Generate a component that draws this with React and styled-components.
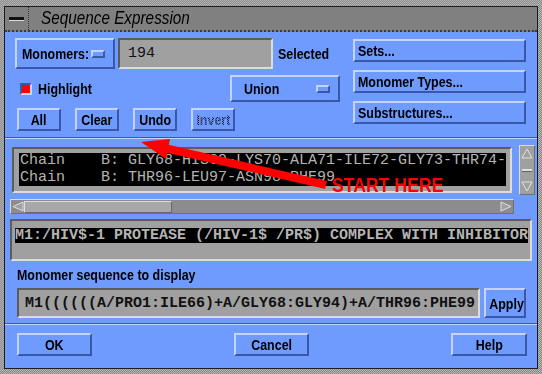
import React from 'react';
import styled, { createGlobalStyle } from 'styled-components';

/* ---------- palette ---------- */
const BLUE = '#6f9bff';
const BLUE_LIGHT = '#c2d4ff';
const BLUE_DARK = '#3a58a8';
const GREY = '#a0a0a0';
const GREY_LIGHT = '#dcdcdc';
const GREY_DARK = '#5c5c5c';
const UI = `"Liberation Sans", Arial, sans-serif`;
const MONO = `"Liberation Mono", "DejaVu Sans Mono", monospace`;

const Global = createGlobalStyle`
  html, body { margin: 0; padding: 0; background: #9a9a9a; }
  body { font-family: ${UI}; }
`;

/* the original toolkit font is a narrow helvetica: squeeze the text */
const Txt = styled.span`
  display: inline-block;
  white-space: nowrap;
  min-width: 0;
  flex: 0 1 auto;
  transform: scaleX(${({ $s }) => $s || 0.83});
  transform-origin: ${({ $o }) => $o || 'center'};
`;

/* ---------- window frame ---------- */
const Screen = styled.div`
  position: relative;
  width: 542px;
  height: 374px;
  box-sizing: border-box;
  padding: 6px 4px 5px 4px;
  display: flex;
  flex-direction: column;
  background-color: #b4b4b4;
  background-image: repeating-conic-gradient(#8a8a8a 0 25%, transparent 0 50%);
  background-size: 2px 2px;
  overflow: hidden;
`;

const Window = styled.div`
  flex: 1;
  display: flex;
  flex-direction: column;
  border: 1px solid #1c1c1c;
`;

const TitleBar = styled.div`
  height: 23px;
  display: flex;
  align-items: center;
  background: #808080;
  border-bottom: 2px dotted #3a3a3a;
`;

const MenuButton = styled.div`
  width: 24px;
  height: 100%;
  display: flex;
  align-items: center;
  justify-content: center;
  border-right: 1px dotted #303030;
  box-sizing: border-box;

  &::before {
    content: '';
    width: 15px;
    height: 3px;
    background: #111;
    border-bottom: 1px solid #ddd;
  }
`;

const Title = styled.div`
  margin-left: 12px;
  font-family: ${UI};
  font-style: italic;
  font-size: 18px;
  color: #000;
`;

const Body = styled.div`
  flex: 1;
  background: ${BLUE};
  display: flex;
  flex-direction: column;
`;

/* ---------- generic parts ---------- */
const Button = styled.div`
  box-sizing: border-box;
  width: ${({ $w }) => $w}px;
  height: ${({ $h }) => $h || 23}px;
  border: 2px solid;
  border-color: ${BLUE_LIGHT} ${BLUE_DARK} ${BLUE_DARK} ${BLUE_LIGHT};
  display: flex;
  align-items: center;
  justify-content: ${({ $left }) => ($left ? 'flex-start' : 'center')};
  padding: ${({ $left }) => ($left ? '0 0 0 3px' : '0')};
  font-family: ${UI};
  font-weight: bold;
  font-size: 15px;
  color: #000;
  white-space: nowrap;
`;

const OptionButton = styled(Button)`
  justify-content: flex-start;
  padding: 0 8px 0 ${({ $pl }) => $pl || 5}px;
`;

const Stipple = styled.span`
  color: transparent;
  background-image: repeating-conic-gradient(#000 0 25%, transparent 0 50%);
  background-size: 2px 2px;
  -webkit-background-clip: text;
  background-clip: text;
`;

const Indicator = styled.span`
  flex: none;
  margin-left: auto;
  width: 10px;
  height: 4px;
  border: 2px solid;
  border-color: ${BLUE_LIGHT} ${BLUE_DARK} ${BLUE_DARK} ${BLUE_LIGHT};
`;

const Field = styled.div`
  box-sizing: border-box;
  width: ${({ $w }) => $w}px;
  height: ${({ $h }) => $h}px;
  margin-left: ${({ $ml }) => $ml || 0}px;
  background: ${GREY};
  border: 2px solid;
  border-color: ${GREY_DARK} ${GREY_LIGHT} ${GREY_LIGHT} ${GREY_DARK};
  display: flex;
  align-items: center;
  padding-left: ${({ $pad }) => $pad || 6}px;
  font-family: ${MONO};
  font-weight: ${({ $thin }) => ($thin ? 'normal' : 'bold')};
  font-size: 15px;
  color: #111;
  white-space: nowrap;
  overflow: hidden;
`;

const Label = styled.div`
  font-family: ${UI};
  font-weight: bold;
  font-size: 15px;
  color: #000;
  margin-left: ${({ $ml }) => $ml || 0}px;
`;

const Separator = styled.div`
  height: 1px;
  border-top: 1px solid ${BLUE_DARK};
  background: ${BLUE_LIGHT};
  margin-top: ${({ $mt }) => $mt}px;
`;

/* ---------- top section ---------- */
const Top = styled.div`
  display: grid;
  grid-template-columns: 325px 173px;
  column-gap: 13px;
  padding: 6px 0 0 10px;
`;

const LeftCol = styled.div`
  display: flex;
  flex-direction: column;
  gap: 6px;
`;

const Row = styled.div`
  display: flex;
  align-items: center;
  gap: ${({ $gap }) => $gap || 0}px;
  padding-left: ${({ $pl }) => $pl || 0}px;
  justify-content: ${({ $between }) => ($between ? 'space-between' : 'flex-start')};
`;

const RightCol = styled.div`
  display: flex;
  flex-direction: column;
  gap: 8px;
  padding-top: 1px;
`;

const Check = styled.div`
  display: flex;
  align-items: center;
  gap: 6px;
  padding-left: 5px;
`;

const CheckBox = styled.span`
  box-sizing: border-box;
  width: 12px;
  height: 12px;
  background: #ff0000;
  border: 2px solid;
  border-color: ${BLUE_DARK} ${BLUE_LIGHT} ${BLUE_LIGHT} ${BLUE_DARK};
`;

/* ---------- list section ---------- */
const ListRow = styled.div`
  display: flex;
  align-items: center;
  gap: 7px;
  padding: 6px 0 0 7px;
`;

const ListFrame = styled.div`
  box-sizing: border-box;
  width: 500px;
  height: 46px;
  background: ${GREY};
  border: 2px solid;
  border-color: ${GREY_DARK} ${GREY_LIGHT} ${GREY_LIGHT} ${GREY_DARK};
  padding: 4px 4px 0 5px;
`;

const Selected = styled.div`
  background: #000;
  color: #b4b4b4;
  font-family: ${MONO};
  font-size: 15px;
  line-height: 16.5px;
  white-space: pre;
  overflow: hidden;
  padding-left: 1px;
`;

const VScroll = styled.div`
  box-sizing: border-box;
  width: 16px;
  height: 50px;
  background: ${GREY};
  border: 1px solid;
  border-color: ${GREY_LIGHT} #707070 #707070 ${GREY_LIGHT};
  display: flex;
  flex-direction: column;
  align-items: center;
  justify-content: space-between;
  padding: 2px 0;
`;

const HScroll = styled.div`
  box-sizing: border-box;
  margin: 4px 0 0 5px;
  width: 504px;
  height: 15px;
  background: #8c8c8c;
  border: 1px solid;
  border-color: ${GREY_LIGHT} #707070 #707070 ${GREY_LIGHT};
  display: flex;
  align-items: center;
  padding: 0 1px;
`;

const Thumb = styled.div`
  box-sizing: border-box;
  width: ${({ $w }) => $w}px;
  height: 12px;
  background: #a8a8a8;
  border: 1px solid;
  border-color: ${GREY_LIGHT} #6a6a6a #6a6a6a ${GREY_LIGHT};
`;

const Spacer = styled.div`
  flex: 1;
`;

const InfoBox = styled.div`
  box-sizing: border-box;
  margin: 5px 0 0 5px;
  width: 522px;
  height: 42px;
  background: ${GREY};
  border: 2px solid;
  border-color: ${GREY_DARK} ${GREY_LIGHT} ${GREY_LIGHT} ${GREY_DARK};
  padding: 4px 0 0 3px;
`;

const InfoLine = styled.span`
  display: inline-block;
  background: #000;
  color: #b4b4b4;
  font-family: ${MONO};
  font-weight: bold;
  font-size: 15px;
  line-height: 15px;
  white-space: pre;
`;

/* ---------- bottom section ---------- */
const SeqLabel = styled(Label)`
  padding: 6px 0 0 12px;
  line-height: 16px;
`;

const SeqRow = styled(Row)`
  padding: 5px 0 0 12px;
  gap: 4px;
`;

const Actions = styled.div`
  display: flex;
  justify-content: space-between;
  padding: 8px 10px 0 12px;
`;

/* ---------- annotation overlay ---------- */
const Overlay = styled.svg`
  position: absolute;
  left: 0;
  top: 0;
  pointer-events: none;
`;

const Annotation = styled.div`
  position: absolute;
  left: 332px;
  top: 173px;
  font-family: ${UI};
  font-weight: bold;
  font-size: 21px;
  color: #ff0000;
  white-space: nowrap;
`;

const ArrowGlyph = ({ dir }) => (
  <svg width="12" height="11" viewBox="0 0 12 11">
    {dir === 'up' && <polygon points="6,1 11,10 1,10" fill="#a0a0a0" stroke="#e0e0e0" strokeWidth="1" />}
    {dir === 'down' && <polygon points="1,1 11,1 6,10" fill="#a0a0a0" stroke="#e0e0e0" strokeWidth="1" />}
    {dir === 'left' && <polygon points="1,5.5 11,1 11,10" fill="#a0a0a0" stroke="#e0e0e0" strokeWidth="1" />}
    {dir === 'right' && <polygon points="1,1 11,5.5 1,10" fill="#a0a0a0" stroke="#e0e0e0" strokeWidth="1" />}
  </svg>
);

const MidBar = styled.span`
  width: 10px;
  height: 2px;
  background: #e0e0e0;
  border-bottom: 1px solid #606060;
`;

export default function App() {
  return (
    <>
      <Global />
      <Screen>
        <Window>
          <TitleBar>
            <MenuButton />
            <Title>
              <Txt $s={0.85} $o="left">Sequence Expression</Txt>
            </Title>
          </TitleBar>
          <Body>
            <Top>
              <LeftCol>
                <Row>
                  <OptionButton $w={100} $h={31}>
                    <Txt $o="left">Monomers:</Txt>
                    <Indicator />
                  </OptionButton>
                  <Field $w={164} $h={31} $pad={8} $ml={3} $thin>
                    194
                  </Field>
                  <Label $ml={5}>
                    <Txt $o="left">Selected</Txt>
                  </Label>
                </Row>
                <Row $between>
                  <Check>
                    <CheckBox />
                    <Label>
                      <Txt $o="left">Highlight</Txt>
                    </Label>
                  </Check>
                  <OptionButton $w={110} $h={27} $pl={12}>
                    <Txt $o="left">Union</Txt>
                    <Indicator />
                  </OptionButton>
                </Row>
                <Row $gap={14} $pl={2}>
                  <Button $w={44}><Txt>All</Txt></Button>
                  <Button $w={44}><Txt>Clear</Txt></Button>
                  <Button $w={44}><Txt>Undo</Txt></Button>
                  <Button $w={44}>
                    <Txt>
                      <Stipple>Invert</Stipple>
                    </Txt>
                  </Button>
                </Row>
              </LeftCol>
              <RightCol>
                <Button $w={173} $left><Txt $o="left">Sets...</Txt></Button>
                <Button $w={173} $left><Txt $o="left">Monomer Types...</Txt></Button>
                <Button $w={173} $left><Txt $o="left">Substructures...</Txt></Button>
              </RightCol>
            </Top>

            <Separator $mt={6} />

            <ListRow>
              <ListFrame>
                <Selected>
                  {'Chain    B: GLY68-HIS69-LYS70-ALA71-ILE72-GLY73-THR74-\nChain    B: THR96-LEU97-ASN98-PHE99'}
                </Selected>
              </ListFrame>
              <VScroll>
                <ArrowGlyph dir="up" />
                <MidBar />
                <ArrowGlyph dir="down" />
              </VScroll>
            </ListRow>

            <HScroll>
              <ArrowGlyph dir="left" />
              <Thumb $w={148} />
              <Spacer />
              <ArrowGlyph dir="right" />
            </HScroll>

            <InfoBox>
              <InfoLine>M1:/HIV$-1 PROTEASE (/HIV-1$ /PR$) COMPLEX WITH INHIBITOR</InfoLine>
            </InfoBox>

            <SeqLabel>
              <Txt $o="left">Monomer sequence to display</Txt>
            </SeqLabel>
            <SeqRow>
              <Field $w={463} $h={30}>M1((((((A/PRO1:ILE66)+A/GLY68:GLY94)+A/THR96:PHE99</Field>
              <Button $w={42} $h={30}><Txt>Apply</Txt></Button>
            </SeqRow>

            <Separator $mt={5} />

            <Actions>
              <Button $w={75}><Txt>OK</Txt></Button>
              <Button $w={75}><Txt>Cancel</Txt></Button>
              <Button $w={76}><Txt>Help</Txt></Button>
            </Actions>
          </Body>
        </Window>

        <Overlay width="542" height="374" viewBox="0 0 542 374">
          <line x1="160" y1="147" x2="326" y2="185" stroke="#ff0000" strokeWidth="8" />
          <polygon points="141,142 170,139 166,159" fill="#ff0000" />
        </Overlay>
        <Annotation>
          <Txt $s={0.84} $o="left">START HERE</Txt>
        </Annotation>
      </Screen>
    </>
  );
}
